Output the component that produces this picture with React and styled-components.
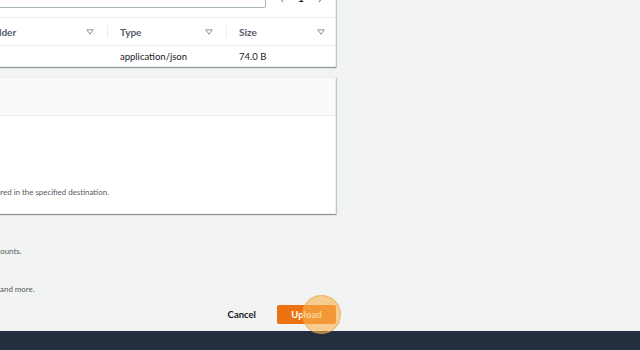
import React from "react";
import styled, { createGlobalStyle } from "styled-components";

const Global = createGlobalStyle`
  *, *::before, *::after { box-sizing: border-box; }
  html, body { margin: 0; padding: 0; }
  body {
    background: #f2f3f3;
    font-family: Lato, "Open Sans", "Liberation Sans", sans-serif;
    color: #16191f;
    overflow: hidden;
    width: 640px;
    height: 350px;
  }
`;

const Page = styled.div`
  display: flex;
  flex-direction: column;
  height: 350px;
`;

const Main = styled.main`
  flex: 1;
  display: flex;
  min-height: 0;
`;

const Column = styled.div`
  margin-left: -175px;
  width: 511px;
  display: flex;
  flex-direction: column;
`;

const Card = styled.section`
  background: #fff;
  border: 1px solid #eaeded;
  border-top: ${(p) => (p.$noTop ? "none" : "1px solid #eaeded")};
  box-shadow: 0 1px 1px 0 rgba(0, 28, 36, 0.3), 1px 1px 1px 0 rgba(0, 28, 36, 0.15);
  margin-top: ${(p) => p.$mt || 0}px;
  display: flex;
  flex-direction: column;
`;

const Toolbar = styled.div`
  display: flex;
  align-items: center;
  gap: 12px;
  padding: 0 11px 0 20px;
  margin-top: 8px;
  height: 20px;
`;

const Search = styled.div`
  flex: 1;
  height: 20px;
  border: 1px solid #aab7b8;
  border-radius: 2px;
  background: #fff;
`;

const Pager = styled.div`
  display: flex;
  align-items: center;
  justify-content: space-between;
  width: 46px;
  font-size: 10px;
  font-weight: 700;
  color: #16191f;
`;

const Chevron = styled.svg`
  width: 7px;
  height: 10px;
  flex: none;
`;

const Table = styled.div`
  margin-top: 9px;
  display: grid;
  grid-template-columns: 1fr 132px 119px 109px;
`;

const HeadCell = styled.div`
  height: 29px;
  border-top: 1px solid #eaeded;
  border-bottom: 1px solid #eaeded;
  display: flex;
  align-items: center;
  justify-content: space-between;
  padding: 0 ${(p) => p.$pr || 13}px 0 13px;
  position: relative;
  font-size: 10px;
  font-weight: 700;
  color: #545b64;

  &::before {
    content: "";
    display: ${(p) => (p.$sep ? "block" : "none")};
    position: absolute;
    left: 0;
    top: 7px;
    bottom: 7px;
    width: 1px;
    background: #eaeded;
  }
`;

const Cell = styled.div`
  height: 20px;
  display: flex;
  align-items: center;
  padding: 0 13px;
  font-size: 9.5px;
  color: #16191f;
  white-space: nowrap;
`;

const CardHeader = styled.div`
  height: 38px;
  background: #fafafa;
  border-bottom: 1px solid #eaeded;
  display: flex;
  align-items: center;
  padding: 0 20px;
  font-size: 11px;
  font-weight: 700;
`;

const CardBody = styled.div`
  height: 97px;
  display: flex;
  flex-direction: column;
  justify-content: flex-end;
  padding: 0 20px 16px 24px;
`;

const Desc = styled.p`
  margin: 0;
  font-size: 7.9px;
  line-height: 10px;
  color: #545b64;
  white-space: nowrap;
  padding-left: ${(p) => p.$indent || 0}px;
  margin-top: ${(p) => p.$mt || 0}px;
`;

const Actions = styled.div`
  margin-top: 11px;
  display: flex;
  justify-content: flex-end;
  align-items: center;
  gap: 21px;
`;

const LinkButton = styled.button`
  border: none;
  background: none;
  padding: 0;
  font-family: inherit;
  font-size: 9.5px;
  font-weight: 700;
  color: #16191f;
`;

const PrimaryButton = styled.button`
  position: relative;
  width: 59px;
  height: 19px;
  border: none;
  border-radius: 2px;
  background: #ec7211;
  color: #fff;
  font-family: inherit;
  font-size: 9.5px;
  font-weight: 700;
  padding: 0;
`;

const Highlight = styled.span`
  position: absolute;
  left: 25px;
  top: -10px;
  width: 39px;
  height: 39px;
  border-radius: 50%;
  background: rgba(248, 178, 80, 0.6);
  border: 1px solid rgba(232, 160, 70, 0.55);
  pointer-events: none;
`;

const Footer = styled.footer`
  height: 19px;
  background: #232f3e;
  flex: none;
`;

const FilterIcon = () => (
  <svg width="8" height="6" viewBox="0 0 8 6">
    <path d="M0.8 0.8 H7.2 L4 5.2 Z" fill="none" stroke="#879596" strokeWidth="1" strokeLinejoin="round" />
  </svg>
);

export default function App() {
  return (
    <Page>
      <Global />
      <Main>
        <Column>
          <Card $noTop $mt={-20}>
            <Toolbar>
              <Search />
              <Pager>
                <Chevron viewBox="0 0 7 10">
                  <path d="M5 1 L2 5 L5 9" fill="none" stroke="#879596" strokeWidth="1.2" />
                </Chevron>
                <span>1</span>
                <Chevron viewBox="0 0 7 10">
                  <path d="M2 1 L5 5 L2 9" fill="none" stroke="#879596" strokeWidth="1.2" />
                </Chevron>
              </Pager>
            </Toolbar>
            <Table>
              <HeadCell>
                <span>Name</span>
                <FilterIcon />
              </HeadCell>
              <HeadCell $sep>
                <span>Folder</span>
                <FilterIcon />
              </HeadCell>
              <HeadCell $sep>
                <span>Type</span>
                <FilterIcon />
              </HeadCell>
              <HeadCell $sep $pr={10}>
                <span>Size</span>
                <FilterIcon />
              </HeadCell>
              <Cell>data.json</Cell>
              <Cell>-</Cell>
              <Cell>application/json</Cell>
              <Cell>74.0 B</Cell>
            </Table>
          </Card>

          <Card $mt={10}>
            <CardHeader>Destination</CardHeader>
            <CardBody>
              <Desc>Bucket settings that impact new objects stored in the specified destination.</Desc>
            </CardBody>
          </Card>

          <Desc $indent={7} $mt={32}>Grant public access and access to other AWS accounts.</Desc>
          <Desc $indent={12} $mt={28}>Specify storage class, encryption settings, tags, and more.</Desc>

          <Actions>
            <LinkButton>Cancel</LinkButton>
            <PrimaryButton>
              Upload
              <Highlight />
            </PrimaryButton>
          </Actions>
        </Column>
      </Main>
      <Footer />
    </Page>
  );
}
